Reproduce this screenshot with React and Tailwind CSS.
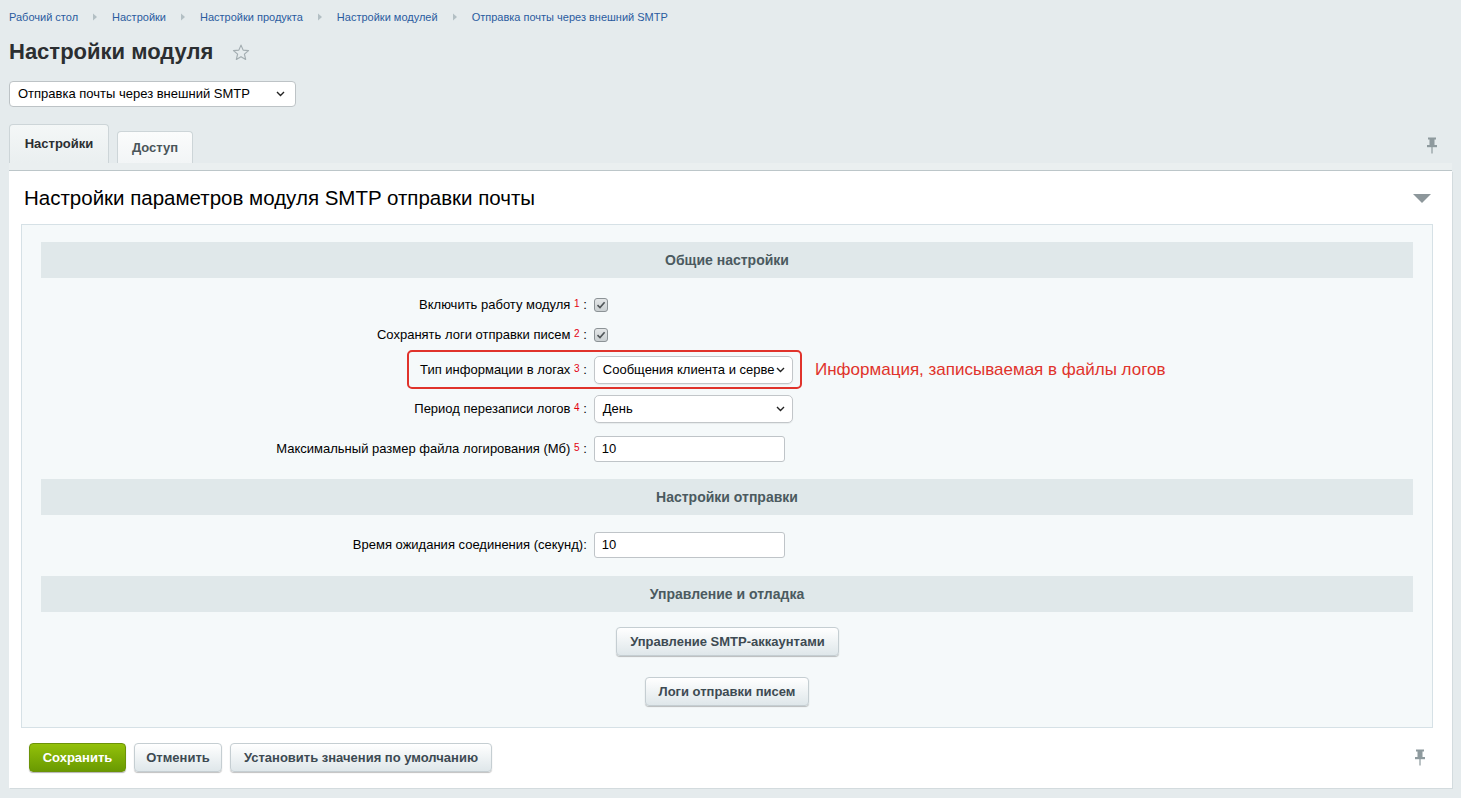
import React from "react";

const Arrow = () => (
  <svg width="6" height="8" viewBox="0 0 6 8" className="mx-[14px]">
    <path d="M1 0.5 L5 4 L1 7.5 Z" fill="#b3bfc4" />
  </svg>
);

const Chevron = () => (
  <svg width="9" height="6" viewBox="0 0 9 6" className="shrink-0">
    <path d="M1 1 L4.5 4.5 L8 1" fill="none" stroke="#222" strokeWidth="1.4" />
  </svg>
);

const Pin = () => (
  <svg width="12" height="17" viewBox="0 0 12 17">
    <rect x="2" y="0.5" width="8" height="2" fill="#8e9a9e" />
    <rect x="3.5" y="2" width="5" height="6" fill="#8e9a9e" />
    <rect x="1" y="8" width="10" height="2.2" fill="#8e9a9e" />
    <rect x="5.4" y="10" width="1.2" height="6.5" fill="#8e9a9e" />
  </svg>
);

const Check = () => (
  <svg width="14" height="14" viewBox="0 0 14 14">
    <defs>
      <linearGradient id="cbg" x1="0" y1="0" x2="0" y2="1">
        <stop offset="0" stopColor="#e4e7e8" />
        <stop offset="1" stopColor="#c9cfd1" />
      </linearGradient>
    </defs>
    <rect x="0.5" y="0.5" width="13" height="13" rx="2.5" fill="url(#cbg)" stroke="#8c9396" />
    <path d="M3.5 7.2 L6 9.6 L10.6 4.2" fill="none" stroke="#4f5558" strokeWidth="1.6" />
  </svg>
);

const Sel = ({ text, w = "w-[199px]" }) => (
  <div className={`${w} h-[28px] bg-white border border-[#c2c6c9] rounded-[5px] flex items-center pl-[8px] pr-[7px] shadow-[0_1px_1px_rgba(0,0,0,0.06)]`}>
    <div className="flex-1 whitespace-nowrap text-[13px] text-black leading-[16px]">{text}</div>
    <Chevron />
  </div>
);

const Inp = ({ value }) => (
  <div className="w-[191px] h-[26px] bg-white border border-[#bfc4c8] rounded-[3px] flex items-center pl-[7px] text-[13px] text-black">
    {value}
  </div>
);

const Label = ({ children, n }) => (
  <div className="text-[13px] text-black whitespace-nowrap">
    {children}
    {n && (
      <>
        {" "}
        <sup className="text-[10px] text-[#e3000f] relative top-[-2px]">{n}</sup>
      </>
    )}
    {" "}:
  </div>
);

const Row = ({ h, label, children, extra }) => (
  <div className={`relative grid grid-cols-[40%_60%] items-center ${h}`}>
    <div className="flex justify-end pr-[3px]">{label}</div>
    <div className="flex items-center pl-[4px]">{children}</div>
    {extra}
  </div>
);

const Header = ({ children }) => (
  <div className="h-[36px] bg-[#e0e8ea] flex items-center justify-center text-[14px] font-bold text-[#4b5a60]">
    {children}
  </div>
);

const Btn = ({ children, className = "" }) => (
  <div
    className={`h-[29px] px-[13px] rounded-[4px] border border-[#c5ced2] bg-gradient-to-b from-[#ffffff] to-[#dfe7ea] shadow-[0_1px_1px_rgba(0,0,0,0.25)] flex items-center justify-center whitespace-nowrap text-[13px] font-bold text-[#3d4a52] ${className}`}
  >
    {children}
  </div>
);

export default function App() {
  return (
    <div className="min-h-[798px] bg-[#e5ebed] font-['Liberation_Sans',Arial,sans-serif] px-[9px] pt-[10px] pb-[10px]">
      {/* breadcrumbs */}
      <div className="flex items-center h-[14px] text-[11px] text-[#2a5b9f] leading-[14px]">
        <span>Рабочий стол</span>
        <Arrow />
        <span>Настройки</span>
        <Arrow />
        <span>Настройки продукта</span>
        <Arrow />
        <span>Настройки модулей</span>
        <Arrow />
        <span>Отправка почты через внешний SMTP</span>
      </div>

      {/* title */}
      <div className="mt-[16px] flex items-center h-[24px]">
        <h1 className="text-[22px] font-bold text-[#2b2e31] leading-[24px]">Настройки модуля</h1>
        <svg width="18" height="17" viewBox="0 0 24 23" className="ml-[19px]">
          <path
            d="M12 1.5 L14.9 8.3 L22.2 8.9 L16.6 13.7 L18.3 20.9 L12 17.1 L5.7 20.9 L7.4 13.7 L1.8 8.9 L9.1 8.3 Z"
            fill="none"
            stroke="#a3adb1"
            strokeWidth="1.6"
            strokeLinejoin="round"
          />
        </svg>
      </div>

      {/* module select */}
      <div className="mt-[17px] w-[287px] h-[26px] bg-white border border-[#bdc3c6] rounded-[4px] flex items-center pl-[8px] pr-[10px]">
        <div className="flex-1 text-[13px] text-black">Отправка почты через внешний SMTP</div>
        <Chevron />
      </div>

      {/* tabs */}
      <div className="mt-[17px] flex items-end h-[39px] relative">
        <div className="h-[39px] w-[100px] rounded-t-[4px] border border-b-0 border-[#cdd5d8] bg-gradient-to-b from-[#f4f7f7] to-[#eaeff0] flex items-center justify-center text-[13px] font-bold text-[#2b2e31]">
          Настройки
        </div>
        <div className="ml-[8px] h-[32px] w-[76px] rounded-t-[4px] border border-b-0 border-[#cdd5d8] bg-gradient-to-b from-[#fbfcfc] to-[#f2f5f6] flex items-center justify-center text-[13px] font-bold text-[#4a5559]">
          Доступ
        </div>
        <div className="absolute right-[14px] top-[13px]">
          <Pin />
        </div>
      </div>
      <div className="h-[8px] bg-[#eaeff0] border-b border-[#bcc6c9]" />

      {/* main panel */}
      <div className="bg-white shadow-[1px_1px_0_#d3dbde] pt-[15px] pb-[16px]">
        <div className="flex items-center justify-between pl-[15px] pr-[21px] h-[24px]">
          <h2 className="text-[20.5px] text-black leading-[24px]">Настройки параметров модуля SMTP отправки почты</h2>
          <svg width="18" height="9" viewBox="0 0 18 9">
            <path d="M0 0 L18 0 L9 9 Z" fill="#8d979b" />
          </svg>
        </div>

        <div className="mt-[14px] ml-[12px] mr-[19px] border border-[#d6e1e6] bg-[#f5f9fa] px-[19px] pt-[17px] pb-[21px]">
          <Header>Общие настройки</Header>
          <div className="pt-[12px] pb-[10px]">
            <Row h="h-[30px]" label={<Label n="1">Включить работу модуля</Label>}>
              <Check />
            </Row>
            <Row h="h-[30px]" label={<Label n="2">Сохранять логи отправки писем</Label>}>
              <Check />
            </Row>
            <Row
              h="h-[39px]"
              label={<Label n="3">Тип информации в логах</Label>}
              extra={
                <>
                  <div className="absolute left-[366px] top-0 w-[395px] h-[39px] border-2 border-[#e0332b] rounded-[5px] pointer-events-none" />
                  <div className="absolute left-[774px] top-0 h-[39px] flex items-center text-[17px] text-[#e0332b] whitespace-nowrap">
                    Информация, записываемая в файлы логов
                  </div>
                </>
              }
            >
              <Sel text="Сообщения клиента и серве" />
            </Row>
            <Row h="h-[40px]" label={<Label n="4">Период перезаписи логов</Label>}>
              <Sel text="День" />
            </Row>
            <Row h="h-[40px]" label={<Label n="5">Максимальный размер файла логирования (Мб)</Label>}>
              <Inp value="10" />
            </Row>
          </div>

          <Header>Настройки отправки</Header>
          <div className="pt-[10px] pb-[11px]">
            <Row h="h-[40px]" label={<div className="text-[13px] text-black whitespace-nowrap">Время ожидания соединения (секунд):</div>}>
              <Inp value="10" />
            </Row>
          </div>

          <Header>Управление и отладка</Header>
          <div className="flex flex-col items-center pt-[15px]">
            <Btn className="ml-[1px]">Управление SMTP-аккаунтами</Btn>
            <Btn className="mt-[21px]">Логи отправки писем</Btn>
          </div>
        </div>

        <div className="mt-[15px] flex items-center pl-[20px] pr-[26px]">
          <div className="h-[29px] w-[97px] rounded-[4px] bg-gradient-to-b from-[#93c10a] to-[#6a9a02] border border-[#6c9308] shadow-[0_1px_1px_rgba(0,0,0,0.3)] flex items-center justify-center text-[13px] font-bold text-white">
            Сохранить
          </div>
          <Btn className="ml-[8px] w-[88px]">Отменить</Btn>
          <Btn className="ml-[8px] w-[262px] px-[8px]">Установить значения по умолчанию</Btn>
          <div className="ml-auto">
            <Pin />
          </div>
        </div>
      </div>
    </div>
  );
}
